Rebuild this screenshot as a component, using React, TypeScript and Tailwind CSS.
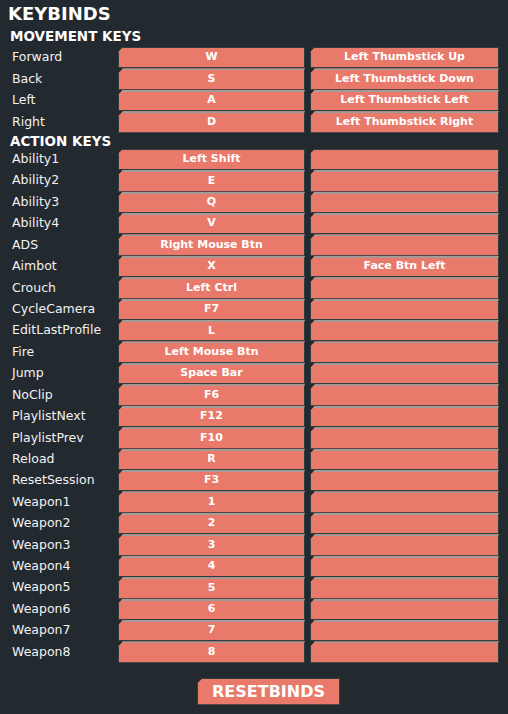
const movement: [string, string, string][] = [
  ['Forward', 'W', 'Left Thumbstick Up'],
  ['Back', 'S', 'Left Thumbstick Down'],
  ['Left', 'A', 'Left Thumbstick Left'],
  ['Right', 'D', 'Left Thumbstick Right'],
];

const actions: [string, string, string][] = [
  ['Ability1', 'Left Shift', ''],
  ['Ability2', 'E', ''],
  ['Ability3', 'Q', ''],
  ['Ability4', 'V', ''],
  ['ADS', 'Right Mouse Btn', ''],
  ['Aimbot', 'X', 'Face Btn Left'],
  ['Crouch', 'Left Ctrl', ''],
  ['CycleCamera', 'F7', ''],
  ['EditLastProfile', 'L', ''],
  ['Fire', 'Left Mouse Btn', ''],
  ['Jump', 'Space Bar', ''],
  ['NoClip', 'F6', ''],
  ['PlaylistNext', 'F12', ''],
  ['PlaylistPrev', 'F10', ''],
  ['Reload', 'R', ''],
  ['ResetSession', 'F3', ''],
  ['Weapon1', '1', ''],
  ['Weapon2', '2', ''],
  ['Weapon3', '3', ''],
  ['Weapon4', '4', ''],
  ['Weapon5', '5', ''],
  ['Weapon6', '6', ''],
  ['Weapon7', '7', ''],
  ['Weapon8', '8', ''],
];

function KeyCell({ text, first, wide }: { text: string; first: boolean; wide?: boolean }) {
  return (
    <div
      className={`flex h-full items-center justify-center border border-[#2f3d3e] bg-[#e9796a] text-[11px] font-bold text-white [clip-path:polygon(5px_0,100%_0,100%_100%,0_100%,0_5px)] ${
        first ? '' : 'border-t-2 border-t-[#a39b97]'
      } ${wide ? 'w-[189px]' : 'w-[187px]'}`}
    >
      <span className="-mt-px">{text}</span>
    </div>
  );
}

function Rows({ rows }: { rows: [string, string, string][] }) {
  return (
    <div className="flex flex-col">
      {rows.map(([label, key, pad], i) => (
        <div key={label} className="flex h-[21.43px] items-center">
          <div className="w-[118px] pl-3 text-[12.5px] text-[#f2f2f2]">{label}</div>
          <KeyCell text={key} first={i === 0} />
          <div className="w-[5px]" />
          <KeyCell text={pad} first={i === 0} wide />
        </div>
      ))}
    </div>
  );
}

export default function App() {
  return (
    <div className="h-[714px] w-[508px] overflow-hidden bg-[#22292f] font-['DejaVu_Sans',sans-serif] text-white">
      <h1 className="pl-2 pt-[3px] text-[18px] font-bold leading-[22px]">KEYBINDS</h1>
      <h2 className="pl-[10px] pt-px text-[13.5px] font-bold leading-[21px]">MOVEMENT KEYS</h2>
      <Rows rows={movement} />
      <h2 className="pl-[10px] pt-px text-[13.5px] font-bold leading-[15px]">ACTION KEYS</h2>
      <Rows rows={actions} />
      <div className="pt-[15px] pl-[197px]">
        <div className="flex h-[27px] w-[143px] items-center justify-center border border-[#2f3d3e] bg-[#e9796a] text-[16px] font-bold text-white [clip-path:polygon(6px_0,100%_0,100%_100%,0_100%,0_6px)]">
          <span className="mt-px">RESETBINDS</span>
        </div>
      </div>
    </div>
  );
}
